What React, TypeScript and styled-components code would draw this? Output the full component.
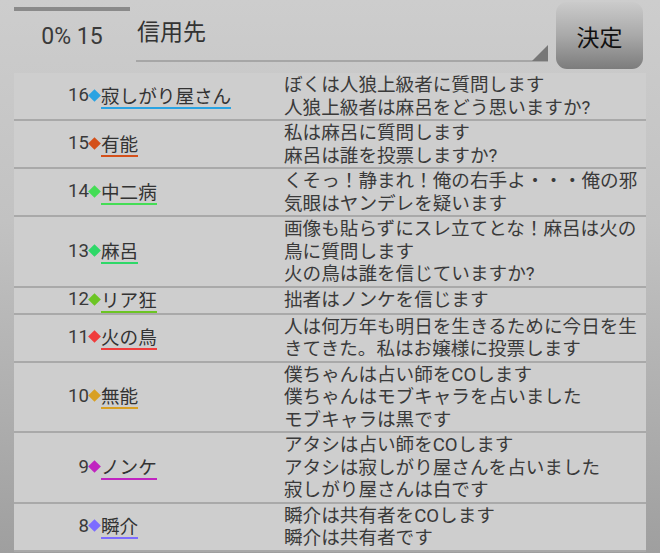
import React from "react";
import styled, {createGlobalStyle} from "styled-components";

const GlobalStyle = createGlobalStyle`
    html, body{
        margin: 0;
        padding: 0;
    }
    body{
        width: 660px;
        height: 553px;
        overflow: hidden;
        background: linear-gradient(to bottom, #cdcdcd 0%, #c2c2c2 40%, #9f9f9f 100%);
        font-family: "Roboto", "Noto Sans CJK JP", sans-serif;
        color: #3a3a3a;
    }
`

const Header = styled.div`
    display: flex;
    align-items: flex-start;
    height: 73px;
    padding: 0 17px 0 14px;
    box-sizing: border-box;
`

const Progress = styled.div`
    width: 116px;
    display: flex;
    flex-direction: column;
    padding-top: 7px;
`

const Bar = styled.div`
    height: 4px;
    background: #d0d0d0;
    div{
        height: 100%;
        background: #8a8a8a;
    }
`

const Count = styled.div`
    font-size: 23px;
    line-height: 26px;
    margin-top: 13px;
    text-align: center;
    color: #3a3a3a;
`

const Spinner = styled.div`
    flex: 1;
    position: relative;
    margin: 0 8px 0 6px;
    height: 62px;
    border-bottom: 2px solid #a6a6a6;
    box-sizing: border-box;
    font-size: 23px;
    line-height: 28px;
    padding: 19px 0 0 1px;
    color: #333;
    &::after{
        content: "";
        position: absolute;
        right: 0;
        bottom: -1px;
        width: 0;
        height: 0;
        border-left: 16px solid transparent;
        border-bottom: 16px solid #777;
    }
`

const Button = styled.button`
    width: 87px;
    height: 67px;
    margin-top: 2px;
    border: none;
    border-radius: 11px;
    background: linear-gradient(to bottom, #cbcbcb 0%, #a9a9a9 50%, #7c7c7c 100%);
    font-family: "Roboto", "Noto Sans CJK JP", sans-serif;
    font-size: 23px;
    color: #111;
    padding: 0;
`

const Table = styled.div`
    margin: 0 14px;
    background: #cecece;
    display: flex;
    flex-direction: column;
`

const Row = styled.div`
    display: flex;
    border-bottom: 2px solid #a9a9a9;
    font-size: 18.6px;
    line-height: 22.5px;
    padding-top: 1px;
`

const Who = styled.div`
    width: 270px;
    display: flex;
    align-items: center;
`

const Num = styled.span`
    width: 75px;
    text-align: right;
    margin-top: -2px;
`

const Diamond = styled.span<{$color: string}>`
    width: 12px;
    display: flex;
    justify-content: center;
    margin: -3px 0 0 -1px;
    &::before{
        content: "";
        width: 9px;
        height: 9px;
        background: ${p => p.$color};
        transform: rotate(45deg);
    }
`

const Name = styled.span<{$color: string}>`
    line-height: 20px;
    border-bottom: 2px solid ${p => p.$color};
    margin: 2px 0 0 1px;
    color: #333;
`

const Message = styled.div`
    flex: 1;
    padding-right: 8px;
    word-break: break-all;
`

type Entry = {no: number, name: string, color: string, lines: string[]}

const entries: Entry[] = [
    {no: 16, name: "寂しがり屋さん", color: "#2aa3e2", lines: ["ぼくは人狼上級者に質問します", "人狼上級者は麻呂をどう思いますか?"]},
    {no: 15, name: "有能", color: "#d4501a", lines: ["私は麻呂に質問します", "麻呂は誰を投票しますか?"]},
    {no: 14, name: "中二病", color: "#44dd55", lines: ["くそっ！静まれ！俺の右手よ・・・俺の邪気眼はヤンデレを疑います"]},
    {no: 13, name: "麻呂", color: "#2ed868", lines: ["画像も貼らずにスレ立てとな！麻呂は火の鳥に質問します", "火の鳥は誰を信じていますか?"]},
    {no: 12, name: "リア狂", color: "#6cc524", lines: ["拙者はノンケを信じます"]},
    {no: 11, name: "火の鳥", color: "#f03c3c", lines: ["人は何万年も明日を生きるために今日を生きてきた。私はお嬢様に投票します"]},
    {no: 10, name: "無能", color: "#d8a024", lines: ["僕ちゃんは占い師をCOします", "僕ちゃんはモブキャラを占いました", "モブキャラは黒です"]},
    {no: 9, name: "ノンケ", color: "#c024c0", lines: ["アタシは占い師をCOします", "アタシは寂しがり屋さんを占いました", "寂しがり屋さんは白です"]},
    {no: 8, name: "瞬介", color: "#7c6cff", lines: ["瞬介は共有者をCOします", "瞬介は共有者です"]},
]

export default function App(){
    const pct = 0;
    return (
        <>
            <GlobalStyle/>
            <Header>
                <Progress>
                    <Bar><div style={{width: "100%"}}/></Bar>
                    <Count>{pct}% 15</Count>
                </Progress>
                <Spinner>信用先</Spinner>
                <Button>決定</Button>
            </Header>
            <Table>
                {entries.map(e => (
                    <Row key={e.no}>
                        <Who>
                            <Num>{e.no}</Num>
                            <Diamond $color={e.color}/>
                            <Name $color={e.color}>{e.name}</Name>
                        </Who>
                        <Message>
                            {e.lines.map((l, i) => <div key={i}>{l}</div>)}
                        </Message>
                    </Row>
                ))}
            </Table>
        </>
    )
}
